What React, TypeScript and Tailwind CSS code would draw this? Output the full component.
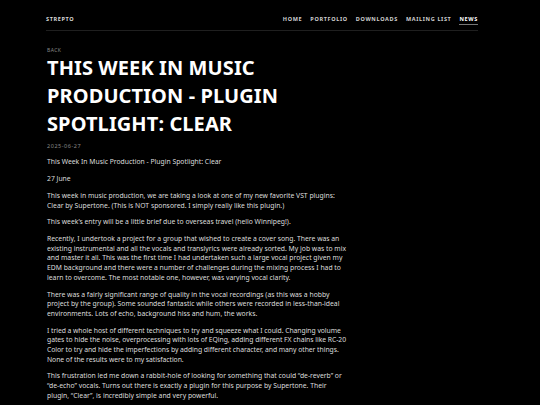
import React from "react";

const navItems = ["HOME", "PORTFOLIO", "DOWNLOADS", "MAILING LIST", "NEWS"];

const paragraphs: { text: string; tight?: boolean }[] = [
  { text: "This Week In Music Production - Plugin Spotlight: Clear" },
  { text: "27 June" },
  {
    text: "This week in music production, we are taking a look at one of my new favorite VST plugins: Clear by Supertone. (This is NOT sponsored. I simply really like this plugin.)",
  },
  { text: "This week\u2019s entry will be a little brief due to overseas travel (hello Winnipeg!)." },
  {
    text: "Recently, I undertook a project for a group that wished to create a cover song. There was an existing instrumental and all the vocals and translyrics were already sorted. My job was to mix and master it all. This was the first time I had undertaken such a large vocal project given my EDM background and there were a number of challenges during the mixing process I had to learn to overcome. The most notable one, however, was varying vocal clarity.",
  },
  {
    text: "There was a fairly significant range of quality in the vocal recordings (as this was a hobby project by the group). Some sounded fantastic while others were recorded in less-than-ideal environments. Lots of echo, background hiss and hum, the works.",
  },
  {
    tight: true,
    text: "I tried a whole host of different techniques to try and squeeze what I could. Changing volume gates to hide the noise, overprocessing with lots of EQing, adding different FX chains like RC-\u206020 Color to try and hide the imperfections by adding different character, and many other things. None of the results were to my satisfaction.",
  },
  {
    text: "This frustration led me down a rabbit-hole of looking for something that could \u201cde-reverb\u201d or \u201cde-echo\u201d vocals. Turns out there is exactly a plugin for this purpose by Supertone. Their plugin, \u201cClear\u201d, is incredibly simple and very powerful.",
  },
];

export default function App() {
  return (
    <div
      className="w-[540px] h-[405px] overflow-hidden bg-black text-[#e6e6e6]"
      style={{ fontFamily: '"Noto Sans", "Open Sans", sans-serif' }}
    >
      <div className="pl-[46px] w-[478px]">
        <header className="flex items-center justify-between h-[31px] pt-[10px] border-b border-[#1f1f1f]">
          <div className="text-[5.5px] font-bold tracking-[0.12em] text-[#d8d8d8] leading-none">STREPTO</div>
          <nav className="flex items-center gap-[8px]">
            {navItems.map((item) => (
              <span
                key={item}
                className={
                  item === "NEWS"
                    ? "relative text-[5.5px] font-bold tracking-[0.12em] leading-none text-white"
                    : "relative text-[5.5px] font-bold tracking-[0.12em] leading-none text-[#cfcfcf]"
                }
              >
                {item}
                {item === "NEWS" && (
                  <span className="absolute left-0 right-0 top-[7px] h-[1px] bg-[#777]" />
                )}
              </span>
            ))}
          </nav>
        </header>

        <div className="pl-[1px] w-[303.5px]">
          <div className="mt-[16px] text-[5px] leading-[6px] tracking-[0.08em] text-[#8a8a8a]">BACK</div>
          <h1 className="mt-[1.3px] text-[20px] leading-[27.8px] font-bold text-white tracking-[0.005em]">
            THIS WEEK IN MUSIC PRODUCTION - PLUGIN SPOTLIGHT: CLEAR
          </h1>
          <div className="mt-[5.6px] text-[5.5px] leading-[6px] tracking-[0.1em] text-[#8a8a8a]">2025-06-27</div>
          <div className="mt-[8.2px] flex flex-col gap-[7.1px] text-[6.8px] leading-[9.65px] text-[#dedede]">
            {paragraphs.map((p, i) => (
              <p key={i} className={p.tight ? "tracking-[-0.006em]" : ""}>
                {p.text}
              </p>
            ))}
          </div>
        </div>
      </div>
    </div>
  );
}
